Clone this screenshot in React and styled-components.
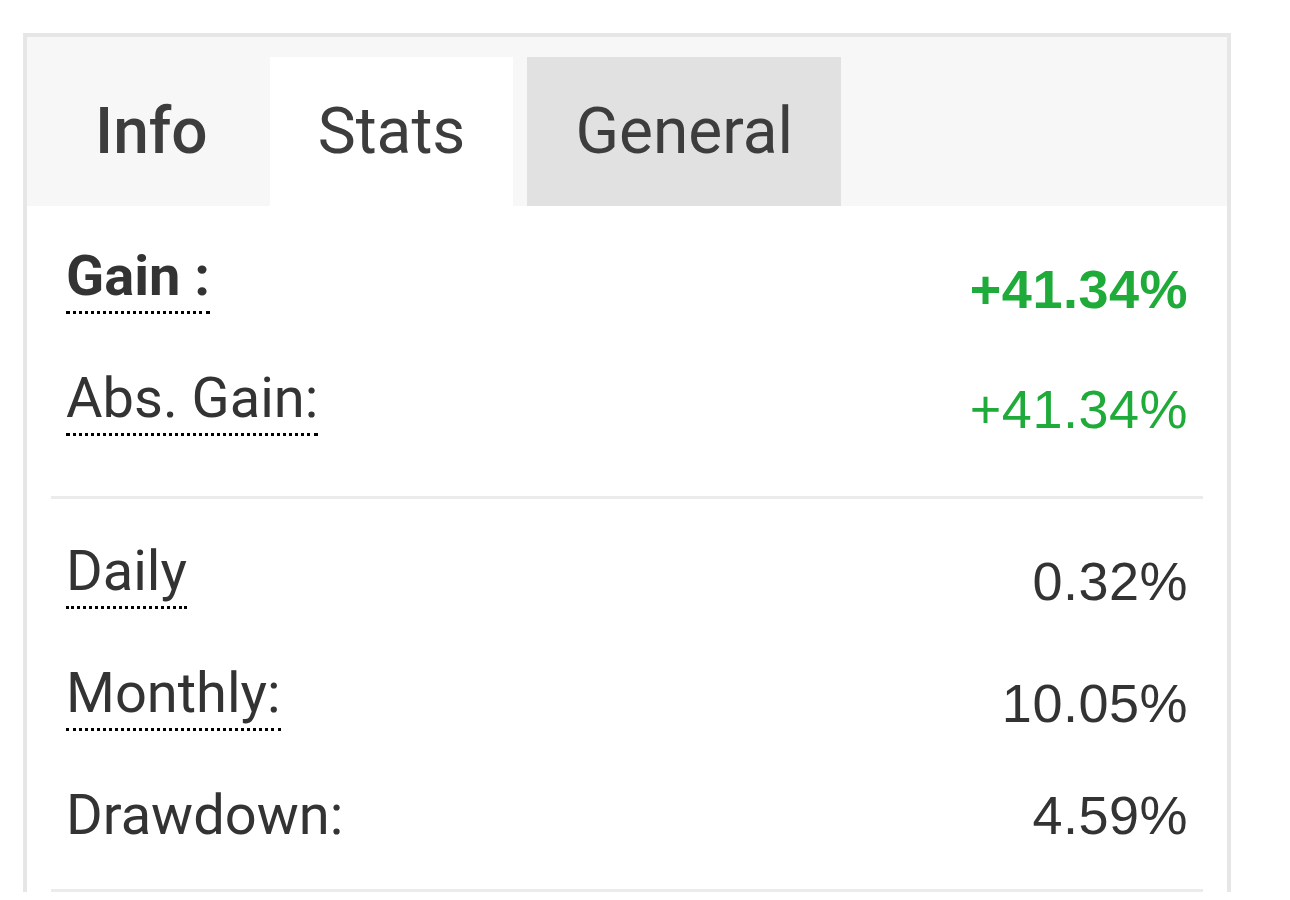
import React from 'react';
import styled, { createGlobalStyle } from 'styled-components';

const GlobalStyle = createGlobalStyle`
  body {
    margin: 0;
    background: #ffffff;
    font-family: Roboto, "Liberation Sans", sans-serif;
  }
`;

const Page = styled.div`
  padding: 33px 0 0 23px;
`;

const Card = styled.div`
  width: 1200px;
  border: 4px solid #e6e6e6;
  border-bottom: none;
  background: #ffffff;
`;

const TabBar = styled.div`
  display: flex;
  padding: 20px 20px 0;
  background: #f7f7f7;
`;

const Tab = styled.div`
  height: 149px;
  display: flex;
  align-items: center;
  padding: 0 48px;
  margin-right: 14px;
  font-size: 64px;
  line-height: 1;
  font-weight: ${(p) => (p.$bold ? 500 : 400)};
  color: #3d3d3d;
  background: ${(p) =>
    p.$active ? '#ffffff' : p.$hover ? '#e1e1e1' : 'transparent'};
`;

const Group = styled.div`
  display: flex;
  flex-direction: column;
  gap: 20px;
  padding: ${(p) => p.$top}px 0 ${(p) => p.$bottom}px;
`;

const Row = styled.div`
  height: 102px;
  display: flex;
  justify-content: space-between;
  align-items: flex-start;
  padding: 0 39px;
`;

const Label = styled.span`
  font-family: Roboto, sans-serif;
  font-size: 56px;
  line-height: 1;
  font-weight: ${(p) => (p.$bold ? 700 : 400)};
  color: #333333;
  padding-bottom: ${(p) => (p.$dotted ? '7px' : '0')};
  border-bottom: ${(p) => (p.$dotted ? '3px dotted #000' : 'none')};
`;

const Value = styled.span`
  font-family: "Liberation Sans", Arial, sans-serif;
  font-size: 54px;
  line-height: 1;
  letter-spacing: 0.5px;
  margin-top: ${(p) => p.$offset}px;
  font-weight: ${(p) => (p.$bold ? 700 : 400)};
  color: ${(p) => (p.$green ? '#1fab3a' : '#333333')};
`;

const Divider = styled.div`
  height: 3px;
  margin: 0 24px;
  background: #ebebeb;
`;

const stats = [
  [
    { label: 'Gain :', value: '+41.34%', bold: true, green: true, dotted: true, offset: 14 },
    { label: 'Abs. Gain:', value: '+41.34%', green: true, dotted: true, offset: 12 },
  ],
  [
    { label: 'Daily', value: '0.32%', dotted: true, offset: 11 },
    { label: 'Monthly:', value: '10.05%', dotted: true, offset: 11 },
    { label: 'Drawdown:', value: '4.59%', offset: 1 },
  ],
];

const App = () => {
  return (
    <Page>
      <GlobalStyle />
      <Card>
        <TabBar>
          <Tab $bold>Info</Tab>
          <Tab $active>Stats</Tab>
          <Tab $hover>General</Tab>
        </TabBar>
        <Group $top={42} $bottom={24}>
          {stats[0].map((s) => (
            <Row key={s.label}>
              <Label $bold={s.bold} $dotted={s.dotted}>{s.label}</Label>
              <Value $bold={s.bold} $green={s.green} $offset={s.offset}>{s.value}</Value>
            </Row>
          ))}
        </Group>
        <Divider />
        <Group $top={44} $bottom={0}>
          {stats[1].map((s) => (
            <Row key={s.label}>
              <Label $dotted={s.dotted}>{s.label}</Label>
              <Value $offset={s.offset}>{s.value}</Value>
            </Row>
          ))}
        </Group>
        <Divider />
      </Card>
    </Page>
  );
};

export default App;
